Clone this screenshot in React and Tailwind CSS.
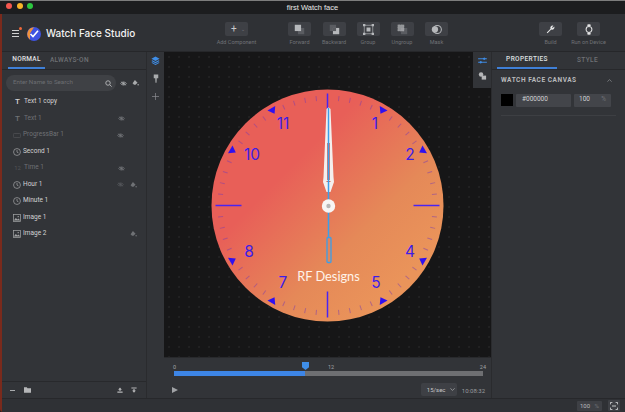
import React from "react";

const layers = [
    { name: "Text 1 copy", icon: "text" },
    { name: "Text 1", icon: "text", dim: true, eye: true },
    { name: "ProgressBar 1", icon: "bar", dim: true, eye: true },
    { name: "Second 1", icon: "clock" },
    { name: "Time 1", icon: "digits", dim: true, eye: true },
    { name: "Hour 1", icon: "clock", eye: true, eyeDim: true, lock: true },
    { name: "Minute 1", icon: "clock" },
    { name: "Image 1", icon: "image" },
    { name: "Image 2", icon: "image", lock: true },
];

const Eye = ({ className = "" }) => (
    <svg viewBox="0 0 12 8" className={`w-[7px] h-[5px] ${className}`} fill="none" stroke="currentColor" strokeWidth="1.4">
        <path d="M1 4c2-3.4 8-3.4 10 0-2 3.400-8 3.400-10 0z" />
        <circle cx="6" cy="4" r="1.400" fill="currentColor" />
        <path d="M1.500 1l9 6" strokeWidth="1" />
    </svg>
);

const Fill = ({ className = "" }) => (
    <svg viewBox="0 0 12 10" className={`w-[7px] h-[6px] ${className}`} fill="currentColor">
        <path d="M5 0l4.500 4.500-3.500 3.500H3.500L1 5.500z" />
        <circle cx="10.500" cy="8" r="1.300" />
    </svg>
);

const LayerIcon = ({ type }) => {
    if (type === "text") {
        return <span className="w-[9px] text-center text-[8px] leading-none font-medium">T</span>;
    }
    if (type === "clock") {
        return (
            <svg viewBox="0 0 10 10" className="w-[8px] h-[8px] opacity-70" fill="none" stroke="currentColor" strokeWidth="0.9">
                <circle cx="5" cy="5" r="4.300" />
                <path d="M5 2.500V5.200L6.800 6" />
            </svg>
        );
    }
    if (type === "image") {
        return (
            <svg viewBox="0 0 10 10" className="w-[8px] h-[8px] opacity-70" fill="none" stroke="currentColor" strokeWidth="0.9">
                <rect x="0.700" y="0.700" width="8.600" height="8.600" />
                <path d="M1 8l2.500-3L5.500 7 7 5.500 9 8z" fill="currentColor" stroke="none" />
                <circle cx="6.500" cy="3.300" r="0.900" fill="currentColor" stroke="none" />
            </svg>
        );
    }
    if (type === "digits") {
        return <span className="w-[9px] text-center text-[6px] leading-none opacity-50">12</span>;
    }
    return (
        <svg viewBox="0 0 10 6" className="w-[8px] h-[5px] opacity-50" fill="none" stroke="currentColor" strokeWidth="0.900">
            <rect x="0.500" y="0.500" width="9" height="5" rx="1" />
        </svg>
    );
};

const ToolGlyph = ({ type }) => {
    const back = "#5a5c61";
    const front = "#b6b8bb";
    return (
        <svg viewBox="0 0 14 14" className="w-[11px] h-[11px]">
            {type === "forward" && (
                <>
                    <rect x="5" y="5" width="8" height="8" fill={back} />
                    <rect x="1" y="1" width="8" height="8" fill={front} />
                </>
            )}
            {type === "backward" && (
                <>
                    <rect x="1" y="1" width="8" height="8" fill={back} />
                    <rect x="5" y="5" width="8" height="8" fill={front} />
                    <rect x="5" y="5" width="4" height="4" fill={back} />
                </>
            )}
            {type === "group" && (
                <>
                    <rect x="1.500" y="1.500" width="11" height="11" fill="none" stroke={front} strokeWidth="0.800" />
                    <rect x="4.500" y="4.500" width="5" height="5" fill={front} />
                    <path d="M0 0h3v3H0zM11 0h3v3h-3zM0 11h3v3H0zM11 11h3v3h-3z" fill={front} />
                </>
            )}
            {type === "ungroup" && (
                <>
                    <rect x="5" y="5" width="8" height="8" fill={back} />
                    <rect x="1" y="1" width="8" height="8" fill={front} opacity="0.700" />
                    <path d="M1 1h8v8H1z" fill="none" stroke={front} strokeWidth="0.600" strokeDasharray="1 1" />
                </>
            )}
            {type === "mask" && (
                <>
                    <circle cx="8" cy="7" r="5.200" fill="none" stroke={front} strokeWidth="1.300" />
                    <circle cx="5" cy="7" r="4" fill={front} />
                </>
            )}
        </svg>
    );
};

const ToolButton = ({ label, type, className = "" }) => (
    <div className={`w-[34px] flex flex-col items-center shrink-0 ${className}`}>
        <div className="w-[23px] h-[14px] rounded-[2px] bg-[#3e4045] flex items-center justify-center">
            <ToolGlyph type={type} />
        </div>
        <span className="mt-[3px] text-[5.500px] leading-[7px] text-[#6f7175] whitespace-nowrap">{label}</span>
    </div>
);

const Face = () => {
    const cx = 116.500;
    const cy = 116.500;
    const ticks = Array.from({ length: 60 }, (_, i) => i * 6).filter((a) => a % 30 !== 0);
    const marks = [30, 60, 120, 150, 210, 240, 300, 330];
    const numbers = [
        ["1", 164, 40], ["2", 199, 71], ["4", 199, 168], ["5", 165, 199],
        ["7", 72, 199], ["8", 38, 168], ["10", 41, 71], ["11", 72, 40],
    ];
    return (
        <svg viewBox="0 0 233 234" className="w-[233px] h-[234px]">
            <defs>
                <linearGradient id="faceFill" x1="0.150" y1="0.200" x2="0.800" y2="0.850">
                    <stop offset="0.250" stopColor="#e85f58" />
                    <stop offset="0.700" stopColor="#e58958" />
                    <stop offset="1" stopColor="#ea945a" />
                </linearGradient>
            </defs>
            <circle cx={cx} cy={cy} r="116" fill="url(#faceFill)" />
            {ticks.map((a) => (
                <line key={a} x1={cx} y1={cy - 110} x2={cx} y2={cy - 105} stroke="#7a3cb0" strokeOpacity="0.500" strokeWidth="1" transform={`rotate(${a} ${cx} ${cy})`} />
            ))}
            {[0, 90, 180, 270].map((a) => (
                <line key={a} x1={cx} y1={cy - 112} x2={cx} y2={cy - 86} stroke="#4a24f2" strokeWidth="1.500" transform={`rotate(${a} ${cx} ${cy})`} />
            ))}
            {marks.map((a) => (
                <polygon key={a} points="-4.500,-2.300 4.500,-2.300 0,4.100" fill="#2f10f0" transform={`rotate(${a} ${cx} ${cy}) translate(${cx} ${cy - 110})`} />
            ))}
            {numbers.map(([label, x, y]) => (
                <text key={label} x={x} y={y} textAnchor="middle" fontFamily="Inter, sans-serif" fontSize="15.500" fill="#3d1de8">{label}</text>
            ))}
            <text x="117.500" y="192" textAnchor="middle" fontFamily="Lato, sans-serif" fontSize="12.800" fill="#fff3ea">RF Designs</text>
            <path d="M115.500 20 Q117.500 17 119.500 20 L122.500 88 L123 93 L119.500 103 H115.500 L112 93 L112.500 88 Z" fill="#f3efee" />
            <rect x="116" y="54" width="3" height="37" fill="#dd7a6c" />
            <rect x="115.500" y="92" width="4" height="1" fill="#d8614f" />
            <line x1="117.500" y1="19" x2="117.500" y2="148" stroke="#3a9fea" strokeWidth="1.500" />
            <circle cx="117.500" cy="117" r="6.700" fill="#f7f5f4" />
            <circle cx="117.500" cy="117" r="2.200" fill="#b7b7b7" />
            <rect x="116" y="148.500" width="4" height="25" rx="1" fill="none" stroke="#3a9fea" strokeWidth="1.300" />
        </svg>
    );
};

const App = () => {
    return (
        <div className="w-[625px] h-[412px] overflow-hidden bg-[#1f1f20] flex flex-col text-[#d9dadb] font-['Roboto',sans-serif] border-t border-[#7d7d7d]">
            <div className="h-[13px] shrink-0 bg-[#1c1d1f] relative flex items-center justify-center">
                <div className="absolute left-[6px] top-[2px] flex gap-[4.500px]">
                    <span className="w-[6px] h-[6px] rounded-full bg-[#f4574f]" />
                    <span className="w-[6px] h-[6px] rounded-full bg-[#f8b428]" />
                    <span className="w-[6px] h-[6px] rounded-full bg-[#2cc640]" />
                </div>
                <span className="text-[7.500px] font-medium text-[#e8e8e8] font-['Liberation_Sans',sans-serif]">first Watch face</span>
            </div>

            <div className="flex-1 flex flex-col border-l-2 border-[#7a2a1c] rounded-bl-[3px] min-h-0">
                <div className="h-[38px] shrink-0 bg-[#2f3135] border-b border-[#26272a] flex items-start">
                    <div className="w-[217.500px] shrink-0 h-full flex items-center pl-[10px] pt-[2px]">
                        <div className="relative mr-[8px]">
                            <div className="w-[6.500px] flex flex-col gap-[1.500px]">
                                <span className="h-[1.500px] bg-[#d0d1d2]" />
                                <span className="h-[1.500px] bg-[#d0d1d2]" />
                                <span className="h-[1.500px] bg-[#d0d1d2]" />
                            </div>
                            <span className="absolute -right-[3px] -top-[3px] w-[3px] h-[3px] rounded-full bg-[#f0683a]" />
                        </div>
                        <svg viewBox="0 0 14 14" className="w-[14px] h-[14px] mr-[5.500px]">
                            <circle cx="7" cy="7" r="7" fill="#3f53e0" />
                            <path d="M7 0.200A7 7 0 0 0 3 12.700V6.500z" fill="#f0923a" />
                            <path d="M3.500 7l2.500 2.500L11 3.800" fill="none" stroke="#fff" strokeWidth="1.600" />
                        </svg>
                        <span className="text-[10px] font-medium text-[#f2f2f2] whitespace-nowrap font-['Inter',sans-serif]">Watch Face Studio</span>
                    </div>
                    <div className="flex pt-[8px]">
                        <div className="w-[34px] flex flex-col items-center shrink-0">
                            <div className="w-[23px] h-[14px] rounded-[2px] bg-[#3e4045] flex items-center gap-[4px] pl-[6px]">
                                <span className="text-[10px] leading-none text-[#c9cacb]">+</span>
                                <span className="text-[5px] leading-none text-[#77797d]">⌄</span>
                            </div>
                            <span className="mt-[3px] text-[5.500px] leading-[7px] text-[#6f7175] whitespace-nowrap">Add Component</span>
                        </div>
                        <ToolButton label="Forward" type="forward" className="ml-[29px]" />
                        <ToolButton label="Backward" type="backward" className="ml-[0.500px]" />
                        <ToolButton label="Group" type="group" />
                        <ToolButton label="Ungroup" type="ungroup" />
                        <ToolButton label="Mask" type="mask" className="ml-[0.500px]" />
                        <div className="w-[38px] ml-[78px] flex flex-col items-center shrink-0">
                            <div className="w-[23px] h-[14px] rounded-[2px] bg-[#3e4045] flex items-center justify-center">
                                <svg viewBox="0 0 12 12" className="w-[9px] h-[9px]" fill="#e4e4e5">
                                    <path d="M1 10l5-5a3 3 0 0 1 4-4L8 3l1 1 2-2a3 3 0 0 1-4 4l-5 5z" />
                                </svg>
                            </div>
                            <span className="mt-[3px] text-[5.500px] leading-[7px] text-[#6f7175]">Build</span>
                        </div>
                        <div className="w-[38px] flex flex-col items-center shrink-0">
                            <div className="w-[23px] h-[14px] rounded-[2px] bg-[#3e4045] flex items-center justify-center">
                                <svg viewBox="0 0 10 14" className="w-[8px] h-[11px]" fill="none" stroke="#e4e4e5">
                                    <circle cx="5" cy="7" r="3.700" strokeWidth="1.300" />
                                    <path d="M3 2.500L3.500 0.500H6.500L7 2.500M3 11.500L3.500 13.500H6.500L7 11.500" fill="#e4e4e5" strokeWidth="0.500" />
                                </svg>
                            </div>
                            <span className="mt-[3px] text-[5.500px] leading-[7px] text-[#6f7175] whitespace-nowrap">Run on Device</span>
                        </div>
                    </div>
                </div>

                <div className="flex-1 flex min-h-0">
                    <div className="w-[145px] shrink-0 bg-[#323438] border-r border-[#2a2b2e] flex flex-col">
                        <div className="h-[18px] shrink-0 border-b border-[#27282b] flex items-center pl-[6px] text-[6.500px] font-medium tracking-[0.300px]">
                            <div className="w-[37px] h-full flex items-center justify-center border-b-2 border-[#3f7fd6] text-[#e0e1e2] pt-[1px]">NORMAL</div>
                            <span className="ml-[5px] pt-[1px] text-[#6f7175]">ALWAYS-ON</span>
                        </div>
                        <div className="flex items-center mt-[5px] pl-[4px]">
                            <div className="w-[110px] h-[16px] rounded-full bg-[#3f4145] flex items-center justify-between pl-[7px] pr-[4px]">
                                <span className="text-[6.200px] text-[#6c6e72]">Enter Name to Search</span>
                                <svg viewBox="0 0 10 10" className="w-[7px] h-[7px]" fill="none" stroke="#b5b6b8" strokeWidth="1.300">
                                    <circle cx="4.300" cy="4.300" r="3.200" />
                                    <path d="M6.800 6.800L9.500 9.500" />
                                </svg>
                            </div>
                            <Eye className="ml-[4px] text-[#a9abad]" />
                            <Fill className="ml-[5px] text-[#a9abad]" />
                        </div>
                        <div className="mt-[3px] flex flex-col">
                            {layers.map((layer) => (
                                <div key={layer.name} className={`h-[16.500px] flex items-center pl-[11px] ${layer.dim ? "text-[#6f7175]" : "text-[#d2d3d4]"}`}>
                                    <LayerIcon type={layer.icon} />
                                    <span className="ml-[2px] text-[6.500px] w-[94px] whitespace-nowrap">{layer.name}</span>
                                    <span className="w-[13px] flex">
                                        {layer.eye && <Eye className={layer.eyeDim ? "text-[#55575b]" : "text-[#717377]"} />}
                                    </span>
                                    {layer.lock && <Fill className="text-[#6f7175]" />}
                                </div>
                            ))}
                        </div>
                        <div className="mt-auto h-[17px] border-t border-[#28292c] flex items-center pl-[8px] pr-[9px]">
                            <span className="w-[5px] h-[1px] bg-[#a9abad]" />
                            <svg viewBox="0 0 10 8" className="ml-[9px] w-[7px] h-[6px]" fill="#b5b6b8">
                                <path d="M0 0h4l1 1.500h5V8H0z" />
                            </svg>
                            <svg viewBox="0 0 8 8" className="ml-auto w-[6px] h-[6px]" fill="#b5b6b8">
                                <path d="M4 0.500L6.500 3.500H1.500zM3 3.500h2V5H3zM0.500 6h7v1.500h-7z" />
                            </svg>
                            <svg viewBox="0 0 8 8" className="ml-[8px] w-[6px] h-[6px]" fill="#b5b6b8">
                                <path d="M0.500 0.500h7V2h-7zM3 3h2v1.500H3zM1.500 4.500h5L4 7.500z" />
                            </svg>
                        </div>
                    </div>

                    <div className="w-[17px] shrink-0 bg-[#323438] flex flex-col items-center pt-[4px] gap-[9px]">
                        <svg viewBox="0 0 10 10" className="w-[9px] h-[9px]" fill="#3f8ee8">
                            <path d="M5 0.500L9.500 3 5 5.500 0.500 3zM1.500 4.800L5 6.800l3.500-2L9.500 5.500 5 8 0.500 5.500zM1.500 7L5 9l3.500-2 1 .6L5 10 .5 7.600z" />
                        </svg>
                        <svg viewBox="0 0 8 12" className="w-[6px] h-[10px]" fill="#a9abad">
                            <path d="M1 0h6v5H1zM3 5h2l-.3 6H3.300z" />
                        </svg>
                        <svg viewBox="0 0 8 8" className="w-[7px] h-[7px]" stroke="#8b8d90" strokeWidth="0.800">
                            <path d="M4 0v8M0 4h8" />
                        </svg>
                    </div>

                    <div className="w-[327px] shrink-0 flex flex-col">
                        <div className="relative h-[305px] shrink-0 bg-[#161617] bg-[radial-gradient(#2c2c2e_0.6px,transparent_0.8px)] bg-[size:10px_10px] flex items-start justify-center pt-[37px]">
                            <Face />
                            <div className="absolute right-0 top-0 w-[18px] h-[36px] bg-[#323438] flex flex-col items-center pt-[5px] gap-[8px]">
                                <svg viewBox="0 0 10 8" className="w-[9px] h-[7px]" stroke="#3f8ee8" strokeWidth="1.100" fill="#3f8ee8">
                                    <path d="M0 2h10M0 6h10" />
                                    <circle cx="7" cy="2" r="0.900" />
                                    <circle cx="3" cy="6" r="0.900" />
                                </svg>
                                <svg viewBox="0 0 10 10" className="w-[9px] h-[8px]" fill="#b5b6b8">
                                    <circle cx="3.200" cy="3.200" r="2.800" />
                                    <rect x="4" y="4.500" width="5.500" height="5" />
                                </svg>
                            </div>
                        </div>
                        <div className="flex-1 bg-[#323438] border-t border-[#28292c] pl-[9px] pr-[8px] flex flex-col">
                            <div className="relative h-[13px] text-[5.500px] text-[#a0a2a5]">
                                <span className="absolute left-0 top-[5px]">0</span>
                                <span className="absolute left-[155px] top-[5px]">12</span>
                                <span className="absolute right-[-3px] top-[5px]">24</span>
                                <svg viewBox="0 0 8 9" className="absolute left-[129px] top-[4px] w-[7px] h-[8px]" fill="#3f8ee8">
                                    <path d="M0 0h8v6L4 9 0 6z" />
                                </svg>
                            </div>
                            <div className="ml-[1px] h-[5px] w-[309px] bg-[#6e6f72] flex">
                                <div className="w-[131px] bg-[#3d85e6]" />
                            </div>
                            <div className="mt-[7px] h-[13px] flex items-center">
                                <svg viewBox="0 0 6 6" className="ml-[-1px] w-[6px] h-[6px]" fill="#a0a2a5">
                                    <path d="M0 0l6 3-6 3z" />
                                </svg>
                                <div className="ml-auto w-[36px] h-[13px] rounded-[2px] bg-[#3e4045] flex items-center pl-[6px] gap-[4px] text-[6px] text-[#c5c6c8]">
                                    <span>15/sec</span>
                                    <svg viewBox="0 0 8 5" className="w-[5px] h-[3px]" fill="none" stroke="#c5c6c8">
                                        <path d="M0.500 0.500L4 4l3.500-3.500" />
                                    </svg>
                                </div>
                                <span className="ml-[5px] mr-[-2px] pt-[2px] text-[6px] text-[#9a9c9f]">10:08:32</span>
                            </div>
                        </div>
                    </div>

                    <div className="flex-1 bg-[#323438] border-l border-[#2a2b2e] flex flex-col">
                        <div className="h-[18px] shrink-0 border-b border-[#27282b] flex items-center pl-[5px] text-[6.500px] font-medium tracking-[0.400px]">
                            <div className="w-[60px] h-full flex items-center justify-center border-b-2 border-[#3f7fd6] text-[#dfe0e1] pt-[1px]">PROPERTIES</div>
                            <span className="ml-[20px] pt-[1px] text-[#6f7175]">STYLE</span>
                        </div>
                        <div className="mt-[6px] pl-[9px] pr-[10px] flex items-center justify-between">
                            <span className="text-[6.500px] font-bold tracking-[0.550px] text-[#b9babc]">WATCH FACE CANVAS</span>
                            <svg viewBox="0 0 8 5" className="w-[5px] h-[3px] mr-[3px]" fill="none" stroke="#a0a2a5">
                                <path d="M0.500 4.500L4 1l3.500 3.500" />
                            </svg>
                        </div>
                        <div className="mt-[8px] mx-[9px] pb-[8px] border-b border-[#3d3f43] flex items-center">
                            <span className="w-[12px] h-[12px] bg-black" />
                            <div className="ml-[3px] w-[55px] h-[13px] bg-[#43454a] rounded-[1px] flex items-center pl-[6px] text-[6.500px] text-[#cfd0d1]">#000000</div>
                            <div className="ml-[3px] w-[37px] h-[13px] bg-[#43454a] rounded-[1px] flex items-center justify-between px-[5px] text-[6.500px] text-[#cfd0d1]">
                                <span>100</span>
                                <span className="text-[#6f7175]">%</span>
                            </div>
                        </div>
                    </div>
                </div>

                <div className="h-[14px] shrink-0 bg-[#2f3135] border-t border-[#27282b] flex items-center justify-end pr-[5px]">
                    <div className="w-[25px] h-[10px] bg-[#3e4045] rounded-[1px] flex items-center justify-between px-[3px] text-[6px] text-[#b9babc]">
                        <span>100</span>
                        <span className="text-[#6f7175]">%</span>
                    </div>
                    <div className="ml-[6px] w-[12px] h-[11px] bg-[#3e4045] rounded-[1px] flex items-center justify-center">
                        <svg viewBox="0 0 10 10" className="w-[8px] h-[8px]" fill="none" stroke="#d7d8d9" strokeWidth="1.100">
                            <path d="M0.500 3V0.500H3M7 0.500h2.500V3M9.500 7v2.500H7M3 9.500H0.500V7M2.500 5h5" />
                        </svg>
                    </div>
                </div>
            </div>
        </div>
    );
};

export default App;
